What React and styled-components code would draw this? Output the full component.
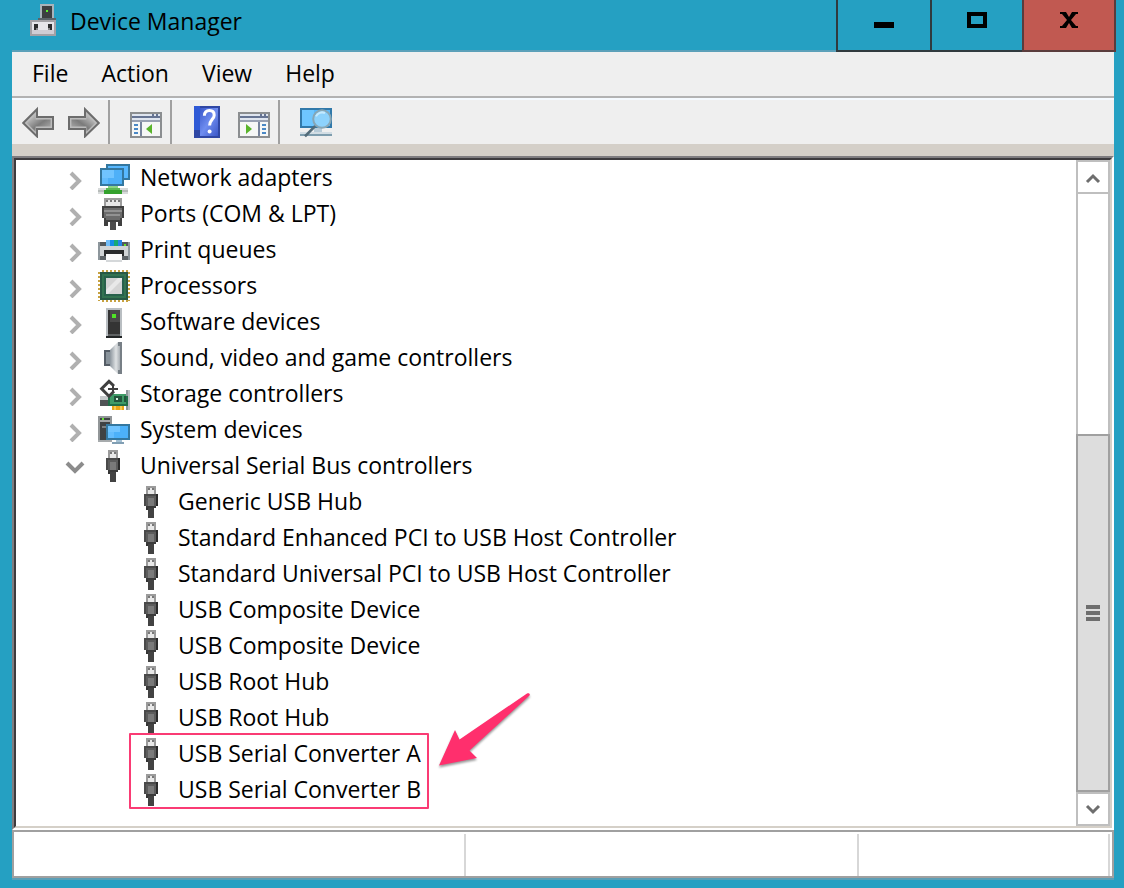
import React from "react";
import styled, { createGlobalStyle } from "styled-components";

const GlobalStyle = createGlobalStyle`
  *, *::before, *::after { box-sizing: border-box; }
  body {
    margin: 0;
    background: #25a0c2;
    color: #000;
    font-family: "Open Sans", "Noto Sans", sans-serif;
    font-size: 23px;
    line-height: 34px;
  }
  button {
    margin: 0;
    padding: 0;
    border: 0;
    background: none;
    font: inherit;
    color: inherit;
  }
`;

/* ---------- icons: 16-unit grid drawn at double size ---------- */

const IconSvg = styled.svg`
  display: block;
  flex: none;
  width: 32px;
  height: 32px;
`;

function Icon({ rects = [], children }) {
  return (
    <IconSvg viewBox="0 0 16 16" aria-hidden="true">
      {rects.map(([fill, x, y, w, h], i) => (
        <rect key={i} fill={fill} x={x} y={y} width={w} height={h} />
      ))}
      {children}
    </IconSvg>
  );
}

const DeviceIcon = () => (
  <Icon
    rects={[
      ["#a9b4ba", 5, 0, 7, 9],
      ["#3d3f40", 6, 1, 5, 6],
      ["#5cf02e", 8, 3, 1, 1],
      ["#5c6468", 4, 7, 9, 1],
      ["#a3a1a6", 0, 8, 13, 8],
      ["#e6e5ea", 1, 9, 11, 6],
      ["#cfcdd4", 1, 13, 11, 2],
      ["#8a898d", 2, 10, 2, 3],
      ["#8a898d", 9, 10, 2, 3],
      ["#2c2c2e", 2, 10, 1, 3],
      ["#2c2c2e", 3, 10, 1, 2],
      ["#2c2c2e", 9, 10, 1, 2],
      ["#2c2c2e", 10, 10, 1, 3],
    ]}
  />
);

const arrowPath = "M.6 8.5 7.5 1.6V5.5H15.5V11.5H7.5V15.2Z";

const ArrowIcon = ({ forward }) => (
  <IconSvg viewBox="0 0 16 16" aria-hidden="true">
    <defs>
      <linearGradient id={forward ? "arrowF" : "arrowB"} x1="0" y1="0" x2="1" y2="1">
        <stop offset=".2" stopColor="#b8b8b8" />
        <stop offset=".55" stopColor="#7b7b7b" />
        <stop offset=".9" stopColor="#a8a8a8" />
      </linearGradient>
    </defs>
    <g transform={forward ? "translate(16 0) scale(-1 1)" : undefined}>
      <path d={arrowPath} fill="#bcbcbc" stroke="#6c6c6c" strokeWidth="1" />
      <path d="M2.4 8.5 6.8 4.1V6.7H14.3V10.3H6.8V12.9Z" fill={`url(#${forward ? "arrowF" : "arrowB"})`} />
    </g>
  </IconSvg>
);

const paneFrame = [
  ["#8b8e90", 0, 3, 16, 13],
  ["#dfe5ef", 1, 4, 14, 1],
  ["#667493", 1, 5, 14, 1],
  ["#667493", 11, 4, 1, 1],
  ["#667493", 13, 4, 1, 1],
  ["#dfe5ef", 1, 6, 14, 1],
  ["#98a0b2", 1, 7, 14, 1],
  ["#f6f7f6", 1, 8, 14, 7],
];

const TreePaneIcon = () => (
  <Icon
    rects={[
      ...paneFrame,
      ["#4a88c5", 2, 9, 2, 1],
      ["#4a88c5", 2, 11, 2, 1],
      ["#4a88c5", 2, 13, 2, 1],
      ["#77839c", 5, 8, 1, 7],
    ]}
  >
    <path d="M8 11.5 11 9V14Z" fill="#59b42b" />
  </Icon>
);

const ActionPaneIcon = () => (
  <Icon
    rects={[
      ...paneFrame,
      ["#4a88c5", 12, 9, 2, 1],
      ["#4a88c5", 12, 11, 2, 1],
      ["#4a88c5", 12, 13, 2, 1],
      ["#77839c", 10, 8, 1, 7],
    ]}
  >
    <path d="M7 11.5 4 9V14Z" fill="#59b42b" />
  </Icon>
);

const HelpIcon = () => (
  <IconSvg viewBox="0 0 16 16" aria-hidden="true">
    <defs>
      <linearGradient id="help" x1="0" y1="0" x2="1" y2="1">
        <stop offset="0" stopColor="#3958ca" />
        <stop offset=".5" stopColor="#6f8df0" />
        <stop offset="1" stopColor="#3a57c8" />
      </linearGradient>
    </defs>
    <rect x="1" width="13" height="16" fill="#2f47a4" />
    <rect x="1" width="3" height="12" fill="#2f5ad6" />
    <rect x="4" y="1" width="9" height="14" fill="url(#help)" />
    <path
      d="M6.2 4.9C6.3 2.9 7.4 2.3 8.7 2.3C10.3 2.3 11.1 3.3 11.1 4.6C11.1 6.5 8.8 7 8.8 9.8"
      fill="none"
      stroke="#fff"
      strokeWidth="1.5"
    />
    <circle cx="8.8" cy="12.7" r="1" fill="#fff" />
  </IconSvg>
);

const ScanIcon = () => (
  <IconSvg viewBox="0 0 16 16" aria-hidden="true">
    <rect x="0" y="1" width="16" height="10" fill="#3179aa" />
    <rect x="1" y="2" width="14" height="8" fill="#58b8fb" />
    <rect x="1" y="2" width="6" height="8" fill="#6ec6ff" />
    <rect x="7" y="11" width="4" height="2" fill="#b7cbd8" />
    <rect x="0" y="13" width="16" height="1" fill="#d2dde4" />
    <rect x="0" y="14" width="16" height="1" fill="#7e9dae" />
    <path d="M7.6 10 2.5 15.2" stroke="#536b78" strokeWidth="1.3" />
    <circle cx="11" cy="6.5" r="4.4" fill="#8dd2fc" stroke="#87a6b5" />
    <path d="M8 5.2A3.4 3.4 0 0 1 12.5 3.5" stroke="#c5eaff" fill="none" />
  </IconSvg>
);

const NetworkIcon = () => (
  <Icon
    rects={[
      ["#34779f", 4, 1, 12, 8],
      ["#58b8ff", 5, 2, 10, 6],
      ["#d7dada", 0, 13, 15, 3],
      ["#b7bcba", 0, 14, 3, 1],
      ["#b7bcba", 12, 14, 3, 1],
      ["#8bd384", 5, 12, 5, 1],
      ["#5cb854", 4, 13, 7, 1],
      ["#34a12d", 3, 14, 9, 2],
      ["#34779f", 1, 3, 12, 9],
      ["#4eb0f8", 2, 4, 10, 7],
      ["#70c4ff", 2, 4, 6, 4],
      ["#62bcfd", 2, 8, 3, 3],
    ]}
  />
);

const PortIcon = () => (
  <Icon
    rects={[
      ["#9d9d9d", 3, 0, 9, 4],
      ["#e5e5e5", 4, 1, 7, 3],
      ["#777", 4, 1, 1, 1],
      ["#777", 6, 1, 1, 1],
      ["#777", 8, 1, 1, 1],
      ["#777", 10, 1, 1, 1],
      ["#414141", 2, 4, 11, 6],
      ["#414141", 3, 10, 9, 2],
      ["#6b6b6b", 3, 5, 9, 5],
      ["#929292", 3, 6, 9, 1],
      ["#929292", 4, 8, 7, 1],
      ["#6b6b6b", 4, 10, 7, 1],
      ["#3f3f3f", 3, 12, 2, 2],
      ["#3f3f3f", 10, 12, 2, 2],
      ["#4c4c4c", 6, 12, 3, 4],
    ]}
  />
);

const PrinterIcon = () => (
  <Icon
    rects={[
      ["#8d969c", 0, 4, 16, 9],
      ["#53595d", 1, 4, 3, 3],
      ["#53595d", 12, 4, 3, 2],
      ["#72bdf8", 4, 3, 2, 3],
      ["#168ce8", 6, 3, 2, 3],
      ["#17aa74", 8, 3, 2, 3],
      ["#2585e8", 10, 3, 2, 3],
      ["#d0d4d6", 1, 6, 14, 5],
      ["#61e329", 13, 5, 1, 1],
      ["#292b2c", 3, 8, 10, 2],
      ["#5d6367", 1, 11, 3, 2],
      ["#5d6367", 12, 11, 3, 2],
      ["#292b2c", 3, 10, 1, 1],
      ["#292b2c", 12, 10, 1, 1],
      ["#fbfbfb", 4, 10, 8, 4],
      ["#d5d8da", 4, 13, 8, 1],
    ]}
  />
);

const ProcessorIcon = () => (
  <Icon>
    <path
      d="M.5 1V15.5M15.5 1V15.5M2 .5H15.5M2 15.5H15.5"
      stroke="#c7a241"
      strokeDasharray="1 1"
      fill="none"
    />
    <rect x="1" y="1" width="14" height="14" fill="#285945" />
    <rect x="2" y="2" width="12" height="12" fill="#337350" />
    <rect x="3" y="3" width="10" height="10" fill="#28614b" />
    <rect x="4" y="4" width="8" height="8" fill="#d4d4d4" />
    <path d="M4 12V10L10 4H12V5L5 12Z" fill="#e8e8e8" />
  </Icon>
);

const SoftwareIcon = () => (
  <Icon
    rects={[
      ["#b9bec2", 4, 1, 8, 14],
      ["#343434", 5, 2, 6, 12],
      ["#494949", 6, 2, 5, 6],
      ["#50e626", 7, 4, 2, 2],
      ["#5f6263", 5, 14, 6, 1],
      ["#222526", 4, 15, 8, 1],
    ]}
  />
);

const SoundIcon = () => (
  <IconSvg viewBox="0 0 16 16" aria-hidden="true">
    <defs>
      <linearGradient id="cone">
        <stop offset="0" stopColor="#8d969e" />
        <stop offset=".5" stopColor="#dfe2e4" />
        <stop offset="1" stopColor="#8c949b" />
      </linearGradient>
    </defs>
    <path d="M3 4H6V12H3Z" fill="#555d66" />
    <path d="M4 5H6V11H4Z" fill="#89939b" />
    <path d="M6 4 10 0H12V16H10L6 12Z" fill="url(#cone)" />
    <path d="M10 0H12V16H10V14H11V2H10Z" fill="#777f86" />
  </IconSvg>
);

const StorageIcon = () => (
  <Icon
    rects={[
      ["#c5c8ca", 1, 9, 5, 5],
      ["#505456", 1, 11, 4, 3],
      ["#8e979b", 14, 6, 1, 10],
      ["#b9bfc2", 15, 6, 1, 10],
      ["#216f48", 5, 9, 10, 5],
      ["#3f9b67", 6, 8, 8, 5],
      ["#24543d", 8, 9, 4, 3],
      ["#d7eee0", 9, 10, 1, 1],
      ["#24543d", 13, 9, 1, 3],
      ["#eaa719", 7, 14, 6, 2],
      ["#f6cb53", 8, 14, 1, 2],
      ["#f6cb53", 11, 14, 1, 2],
    ]}
  >
    <path d="M8 4 5.5 1.7 1.8 5.4 5.5 9.1 8 6.6" fill="none" stroke="#3f3f3f" strokeWidth="1.5" />
    <path d="M5 5.5H10M7.500 4V7.500" fill="none" stroke="#3f3f3f" />
  </Icon>
);

const SystemIcon = () => (
  <Icon
    rects={[
      ["#929698", 0, 1, 7, 13],
      ["#3f4244", 1, 2, 5, 11],
      ["#a2a5a7", 1, 3, 5, 1],
      ["#62e332", 2, 2, 1, 1],
      ["#7a7e80", 2, 6, 2, 1],
      ["#a7abad", 0, 13, 7, 1],
      ["#34779f", 4, 5, 12, 8],
      ["#4cb1fa", 5, 6, 10, 6],
      ["#70c4ff", 5, 6, 6, 3],
      ["#63bdfe", 5, 9, 3, 3],
      ["#a4c1d4", 9, 13, 3, 1],
      ["#819fb4", 7, 14, 6, 1],
    ]}
  />
);

const UsbIcon = () => (
  <Icon
    rects={[
      ["#9b9b9b", 5, 0, 5, 4],
      ["#e8e8e8", 6, 1, 3, 3],
      ["#777", 6, 1, 1, 1],
      ["#777", 8, 1, 1, 1],
      ["#4a4a4a", 4, 4, 7, 6],
      ["#2b2b2b", 10, 4, 1, 6],
      ["#3a3a3a", 5, 10, 5, 1],
      ["#333", 5, 11, 4, 1],
      ["#424242", 6, 11, 3, 5],
      ["#5c5c5c", 5, 5, 5, 5],
      ["#7a7a7a", 6, 6, 3, 4],
    ]}
  />
);

const Chevron = styled.svg`
  display: block;
  width: ${(p) => (p.$small ? 16 : 24)}px;
  height: ${(p) => (p.$small ? 16 : 24)}px;
  fill: none;
  stroke: ${(p) => p.$color};
  stroke-width: ${(p) => (p.$small ? 3 : 4)};
`;

/* ---------- window frame ---------- */

const Window = styled.main`
  display: flex;
  flex-direction: column;
  min-height: 100vh;
  padding-bottom: 8px;
  background: #25a0c2;
`;

const TitleBar = styled.header`
  display: flex;
  height: 52px;
  padding: 0 8px 0 30px;
  background: linear-gradient(#5ba0b9, #5ba0b9) 12px 50px / calc(100% - 22px) 2px no-repeat;
`;

const Title = styled.h1`
  flex: 1;
  display: flex;
  gap: 8px;
  margin: 0;
  padding-top: 4px;
  font-size: 23px;
  font-weight: 400;
`;

const CaptionButton = styled.button`
  width: ${(p) => p.$width}px;
  height: 52px;
  padding-bottom: 8px;
  display: grid;
  place-items: center;
  border: solid ${(p) => (p.$close ? "#5a3c3c" : "#303a3e")};
  border-width: 0 ${(p) => (p.$close ? 2 : 0)}px 2px 2px;
  background: ${(p) => (p.$close ? "#c15951" : "transparent")};
`;

const CaptionGlyph = styled.svg`
  display: block;
  width: 20px;
  height: 20px;
`;

const Client = styled.div`
  flex: 1;
  display: flex;
  flex-direction: column;
  margin: 0 10px 0 12px;
  background: #efefef;
  border-bottom: 2px solid #5b9fb7;
`;

const MenuBar = styled.nav`
  display: flex;
  gap: 33px;
  height: 46px;
  padding: 4px 20px 6px;
  border-bottom: 2px solid #b2b2b2;
`;

const ToolBar = styled.div`
  display: flex;
  height: 46px;
  border-top: 2px solid #f5faff;
`;

const ToolGroup = styled.div`
  display: flex;
  gap: 14px;
  padding: 6px 8px 6px ${(p) => (p.$first ? 10 : 20)}px;
  border-right: ${(p) => (p.$last ? 0 : 2)}px solid #a0a0a0;
`;

const ToolButton = styled.button`
  width: 32px;
  height: 32px;
`;

const Divider = styled.div`
  height: 12px;
  background: #d4cfc8;
`;

/* ---------- device tree ---------- */

const TreeFrame = styled.section`
  flex: 1;
  display: flex;
  border: 2px solid;
  border-color: #7f7d80 #fff #fff #7f7d80;
`;

const TreePane = styled.div`
  flex: 1;
  display: flex;
  border: 2px solid;
  border-color: #3d3b3e #d5d0c8 #d5d0c8 #3d3b3e;
  background: #fff;
`;

const Tree = styled.ul`
  flex: 1;
  position: relative;
  margin: 0;
  padding: 0;
  list-style: none;
`;

const TreeRow = styled.li`
  display: flex;
  align-items: center;
  height: 36px;
  padding-left: ${(p) => (p.$child ? 120 : 46)}px;
  white-space: nowrap;
`;

const Expander = styled.button`
  width: 24px;
  height: 24px;
  margin-right: 12px;
`;

const Label = styled.span`
  margin-left: 10px;
  padding-bottom: 2px;
`;

const Highlight = styled.div`
  position: absolute;
  left: 113px;
  top: 573px;
  width: 300px;
  height: 76px;
  border: 2px solid #fa3b74;
  border-radius: 1px;
`;

const Pointer = styled.svg`
  position: absolute;
  left: 418px;
  top: 528px;
  width: 100px;
  height: 84px;
  filter: drop-shadow(0 2px 1px rgba(0, 0, 0, 0.4));
`;

/* ---------- scroll bar ---------- */

const ScrollBar = styled.div`
  display: flex;
  flex-direction: column;
  width: 34px;
`;

const ScrollButton = styled.button`
  display: grid;
  place-items: center;
  height: 34px;
  border: 2px solid #bfbfbf;
`;

const ScrollSpace = styled.div`
  flex: 242 0 0;
  border: solid #bfbfbf;
  border-width: 0 2px;
`;

const ScrollThumb = styled.div`
  flex: 356 0 0;
  display: flex;
  flex-direction: column;
  align-items: center;
  justify-content: center;
  gap: 2px;
  border: 2px solid #a0a0a0;
  background: #dddddd;
`;

const Grip = styled.span`
  width: 14px;
  height: 4px;
  background: #6e6e6e;
`;

/* ---------- status bar ---------- */

const StatusBar = styled.footer`
  display: flex;
  height: 48px;
  padding: 2px 2px 0 0;
  border: 2px solid #a0a0a0;
  background: #fff;
`;

const StatusCell = styled.div`
  flex: ${(p) => p.$grow} 0 0;
  border-right: 2px solid #d7d7d7;
`;

const categories = [
  ["Network adapters", NetworkIcon],
  ["Ports (COM & LPT)", PortIcon],
  ["Print queues", PrinterIcon],
  ["Processors", ProcessorIcon],
  ["Software devices", SoftwareIcon],
  ["Sound, video and game controllers", SoundIcon],
  ["Storage controllers", StorageIcon],
  ["System devices", SystemIcon],
  ["Universal Serial Bus controllers", UsbIcon, true],
];

const usbDevices = [
  "Generic USB Hub",
  "Standard Enhanced PCI to USB Host Controller",
  "Standard Universal PCI to USB Host Controller",
  "USB Composite Device",
  "USB Composite Device",
  "USB Root Hub",
  "USB Root Hub",
  "USB Serial Converter A",
  "USB Serial Converter B",
];

export default function App() {
  return (
    <>
      <GlobalStyle />
      <Window>
        <TitleBar>
          <Title>
            <DeviceIcon />
            Device Manager
          </Title>
          <CaptionButton $width={94} aria-label="Minimize">
            <CaptionGlyph viewBox="0 0 20 20">
              <path d="M0 11H20V17H0Z" />
            </CaptionGlyph>
          </CaptionButton>
          <CaptionButton $width={92} aria-label="Maximize">
            <CaptionGlyph viewBox="0 0 20 20">
              <path d="M2 3H18V15H2Z" fill="none" stroke="#000" strokeWidth="4" />
            </CaptionGlyph>
          </CaptionButton>
          <CaptionButton $width={94} $close aria-label="Close">
            <CaptionGlyph viewBox="0 0 20 20">
              <path d="M1 1H7L10 6 13 1H19V3H17L12 9 17 15H19V17H13L10 12 7 17H1V15H3L8 9 3 3H1Z" />
            </CaptionGlyph>
          </CaptionButton>
        </TitleBar>

        <Client>
          <MenuBar aria-label="Menu">
            {["File", "Action", "View", "Help"].map((name) => (
              <button key={name}>{name}</button>
            ))}
          </MenuBar>

          <ToolBar role="toolbar" aria-label="Tools">
            <ToolGroup $first>
              <ToolButton aria-label="Back"><ArrowIcon /></ToolButton>
              <ToolButton aria-label="Forward"><ArrowIcon forward /></ToolButton>
            </ToolGroup>
            <ToolGroup>
              <ToolButton aria-label="Show or hide console tree"><TreePaneIcon /></ToolButton>
            </ToolGroup>
            <ToolGroup>
              <ToolButton aria-label="Help topics"><HelpIcon /></ToolButton>
              <ToolButton aria-label="Show or hide action pane"><ActionPaneIcon /></ToolButton>
            </ToolGroup>
            <ToolGroup $last>
              <ToolButton aria-label="Scan for hardware changes"><ScanIcon /></ToolButton>
            </ToolGroup>
          </ToolBar>
          <Divider />

          <TreeFrame>
            <TreePane>
              <Tree>
                {categories.map(([name, CategoryIcon, open]) => (
                  <TreeRow key={name}>
                    <Expander aria-label={name} aria-expanded={Boolean(open)}>
                      <Chevron viewBox="0 0 24 24" $color={open ? "#8c8c8c" : "#b0b0b0"}>
                        <path d={open ? "M5 9 13 17 21 9" : "M9 7 17 15 9 23"} />
                      </Chevron>
                    </Expander>
                    <CategoryIcon />
                    <Label>{name}</Label>
                  </TreeRow>
                ))}
                {usbDevices.map((name, i) => (
                  <TreeRow key={i} $child>
                    <UsbIcon />
                    <Label>{name}</Label>
                  </TreeRow>
                ))}
                <li aria-hidden="true">
                  <Highlight />
                  <Pointer viewBox="0 0 100 84">
                    <path
                      d="M5 77.5 21 42 25.5 51.5 93 5.500C95 4.500 96.500 6 95.500 7.500L35.500 62.500 43 70Z"
                      fill="#ff2f6d"
                    />
                  </Pointer>
                </li>
              </Tree>

              <ScrollBar>
                <ScrollButton aria-label="Scroll up">
                  <Chevron viewBox="0 0 16 16" $small $color="#6e6e6e">
                    <path d="M2 13 8 7 14 13" />
                  </Chevron>
                </ScrollButton>
                <ScrollSpace />
                <ScrollThumb>
                  <Grip />
                  <Grip />
                  <Grip />
                </ScrollThumb>
                <ScrollButton aria-label="Scroll down">
                  <Chevron viewBox="0 0 16 16" $small $color="#6e6e6e">
                    <path d="M2 5 8 11 14 5" />
                  </Chevron>
                </ScrollButton>
              </ScrollBar>
            </TreePane>
          </TreeFrame>

          <StatusBar>
            <StatusCell $grow={452} />
            <StatusCell $grow={394} />
            <StatusCell $grow={250} />
          </StatusBar>
        </Client>
      </Window>
    </>
  );
}
